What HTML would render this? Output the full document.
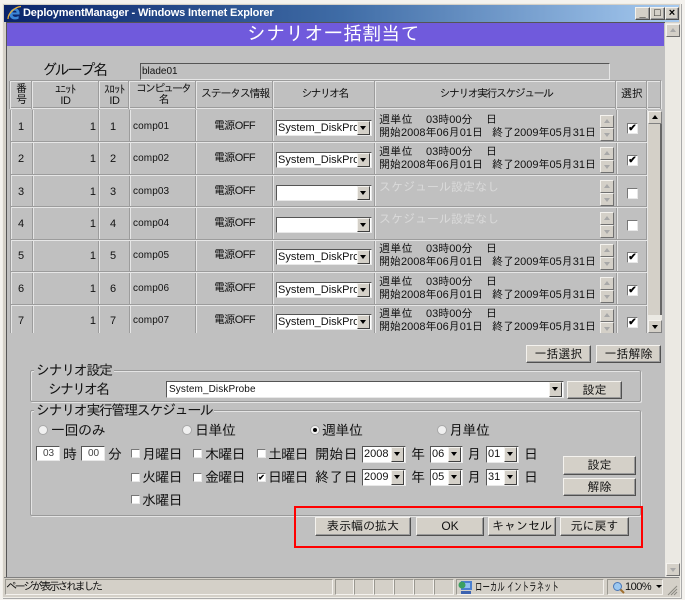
<!DOCTYPE html>
<html lang="ja"><head><meta charset="utf-8"><title>DeploymentManager</title>
<style>
html,body{margin:0;padding:0;width:685px;height:600px;overflow:hidden;background:#f4f2ee}
body{position:relative;font-family:"Liberation Sans","IPAGothic","Noto Sans CJK JP",sans-serif;color:#111;font-size:13px;filter:blur(.3px)}
div,span,i,b{position:absolute;display:block;box-sizing:border-box;font-style:normal;font-weight:normal}
.t{white-space:nowrap;line-height:16px}
.x{font-size:14px;letter-spacing:-.7px}
.h{font-size:11px;line-height:11px;text-align:center;white-space:nowrap;letter-spacing:-1.3px}
.btn{background:#d4d0c8;border:1px solid;border-color:#f4f2ee #505050 #505050 #f4f2ee;box-shadow:inset -1px -1px 0 #9a9a9a;text-align:center;font-size:12px;line-height:16px;white-space:nowrap;color:#111}
.v{width:1px;background:#e6e6e6;box-shadow:-1px 0 0 #9c9c9c}
.l{height:1px;background:#e6e6e6;box-shadow:0 -1px 0 #9c9c9c}
.sel{background:#fff;border:1px solid;border-color:#555 #e8e8e8 #e8e8e8 #555;font-size:11px;line-height:14px;padding-left:1px;white-space:nowrap;overflow:hidden;letter-spacing:0}
.dd{top:0;right:1px;width:13px;bottom:0;background:#d4d0c8;border:1px solid;border-color:#f4f2ee #404040 #404040 #f4f2ee}
.dd:after{content:"";position:absolute;left:2px;top:4px;border:3px solid transparent;border-top:4px solid #000;border-bottom:0}
.r{left:0;width:660px;height:32px}
.n{left:14px;width:14px;top:8px;text-align:center;font-size:11px}
.u{left:60px;width:36px;top:8px;text-align:right;font-size:11px}
.o{left:106px;width:14px;top:8px;text-align:center;font-size:11px}
.c{left:133px;top:8px;font-size:10px;letter-spacing:.1px}
.p{left:214px;top:7px;font-size:11px;letter-spacing:-.6px}
.rs{left:276px;top:9px;width:96px;height:16px}
.s1,.s2,.s3,.s4,.s5{font-size:11px;line-height:12px}
.s1{left:379px;top:3px;letter-spacing:.3px}.s2{left:426px;top:3px}.s3{left:486px;top:3px}
.s4{left:379px;top:16px}.s5{left:492px;top:16px}
.e{left:379px;top:5px;font-size:12px;line-height:12px;color:#dadada;letter-spacing:0;white-space:nowrap}
.sp1,.sp2{left:600px;width:14px;height:13px;background:#d4d0c8;border:1px solid;border-color:#f4f2ee #707070 #707070 #f4f2ee}
.sp1{top:4px}.sp2{top:17px}
.sp1:after{content:"";position:absolute;left:3px;top:3px;border:3px solid transparent;border-bottom:4px solid #a8a8a8;border-top:0}
.sp2:after{content:"";position:absolute;left:3px;top:4px;border:3px solid transparent;border-top:4px solid #a8a8a8;border-bottom:0}
.cb{width:11px;height:11px;background:#fff;border:1px solid;border-color:#777 #e8e8e8 #e8e8e8 #777;font-size:10px;line-height:9px;text-align:center;color:#000;font-weight:bold;overflow:hidden}
.m{width:9px;height:9px;font-size:8px;line-height:7px}
.k{left:627px;top:12px}
.rad{width:10px;height:10px;border-radius:50%;background:#f0f0f0;border:1px solid #a8a8a8}
.dot{left:2px;top:2px;width:4px;height:4px;border-radius:50%;background:#000}
.fs{border:1px solid #9a9a9a;box-shadow:inset 1px 1px 0 #e4e4e4,1px 1px 0 #e4e4e4;border-radius:2px}
.lg{background:#c0c0c0;padding:0 2px;font-size:14px;line-height:14px;white-space:nowrap;letter-spacing:-1.4px}
.sb{background:#d4d0c8;border:1px solid;border-color:#f4f2ee #808080 #808080 #f4f2ee}
.seg{top:579px;height:16px;border:1px solid;border-color:#9a9890 #f4f2ee #f4f2ee #9a9890}
</style></head><body>

<!-- window frame -->
<div style="left:2px;top:3px;width:679px;height:595px;background:#d4d0c8;border:1px solid #f0eee8;box-shadow:1px 1px 0 #aaa"></div>
<div style="left:4px;top:5px;width:675px;height:17px;background:linear-gradient(90deg,#0a246a,#3f6ca6 50%,#a6caf0)"></div>
<svg style="position:absolute;left:7px;top:5px" width="16" height="16" viewBox="0 0 16 16"><path d="M12.5 9.5H5.5C5.6 12 9 12.6 11.6 11V13.6C7.500 15.500 2.500 14 2.500 9.500 2.500 5.500 6 3 9 3.500 12 4 13 7 12.500 9.500ZM9.600 7.500C9.500 5 5.900 5 5.500 7.500Z" fill="#3b86d8" fill-rule="evenodd"/><path d="M1 14C1 8 8 2 14 1.500" fill="none" stroke="#e8b23a" stroke-width="1.300"/></svg>
<span class="t" style="left:23px;top:5px;color:#fff;font-size:11px;letter-spacing:-.15px;font-weight:700">DeploymentManager - Windows Internet Explorer</span>
<div class="btn" style="left:635px;top:7px;width:15px;height:13px;font-weight:bold;line-height:11px;color:#000;font-size:11px">_</div>
<div class="btn" style="left:650px;top:7px;width:15px;height:13px;line-height:10px;color:#000;font-size:11px">□</div>
<div class="btn" style="left:665px;top:7px;width:14px;height:13px;line-height:10px;color:#000;font-size:11px;font-weight:700">×</div>

<!-- page -->
<div style="left:6px;top:22px;width:659px;height:555px;background:#c0c0c0;border-left:1px solid #555;border-top:1px solid #555"></div>
<div style="left:7px;top:23px;width:657px;height:23px;background:#705adc"></div>
<span class="t" style="left:247px;top:24px;color:#fff;font-size:19px;line-height:21px;letter-spacing:.2px">シナリオ一括割当て</span>

<!-- right scrollbar -->
<div style="left:665px;top:23px;width:15px;height:554px;background:#ebe9e3"></div>
<div class="sp1" style="left:666px;top:24px"></div>
<div class="sp2" style="left:666px;top:563px"></div>

<span class="t" style="left:42px;top:63px;font-size:15px;letter-spacing:-2.200px">グループ名</span>
<div style="left:140px;top:63px;width:470px;height:17px;border:1px solid;border-color:#555 #e6e6e6 #e6e6e6 #555"></div>
<span class="t" style="left:142px;top:64px;font-size:10px;line-height:15px">blade01</span>

<!-- header -->
<div class="l" style="left:10px;top:81px;width:651px"></div>
<div class="l" style="left:10px;top:108px;width:651px"></div>
<div class="v" style="left:10px;top:81px;height:28px"></div>
<div class="v" style="left:32px;top:81px;height:28px"></div>
<div class="v" style="left:99px;top:81px;height:28px"></div>
<div class="v" style="left:129px;top:81px;height:28px"></div>
<div class="v" style="left:196px;top:81px;height:28px"></div>
<div class="v" style="left:273px;top:81px;height:28px"></div>
<div class="v" style="left:375px;top:81px;height:28px"></div>
<div class="v" style="left:616px;top:81px;height:28px"></div>
<div class="v" style="left:647px;top:81px;height:28px"></div>
<div class="v" style="left:661px;top:81px;height:28px"></div>
<span class="h" style="left:11px;width:21px;top:84px;letter-spacing:0">番<br>号</span>
<span class="h" style="left:33px;width:65px;top:85px;letter-spacing:-.4px">ﾕﾆｯﾄ<br>ID</span>
<span class="h" style="left:100px;width:29px;top:85px;letter-spacing:-.4px">ｽﾛｯﾄ<br>ID</span>
<span class="h" style="left:130px;width:66px;top:84px;letter-spacing:-2px">コンピュータ<br>名</span>
<span class="h" style="left:197px;width:76px;top:89px">ステータス情報</span>
<span class="h" style="left:274px;width:101px;top:89px;letter-spacing:-1.8px">シナリオ名</span>
<span class="h" style="left:376px;width:240px;top:89px;letter-spacing:-1.6px">シナリオ実行スケジュール</span>
<span class="h" style="left:617px;width:30px;top:89px;letter-spacing:0">選択</span>

<!-- rows viewport -->
<div style="left:0;top:110px;width:662px;height:223px;overflow:hidden">
<div class="v" style="left:11px;top:0;height:223px"></div>
<div class="v" style="left:33px;top:0;height:223px"></div>
<div class="v" style="left:99px;top:0;height:223px"></div>
<div class="v" style="left:130px;top:0;height:223px"></div>
<div class="v" style="left:196px;top:0;height:223px"></div>
<div class="v" style="left:273px;top:0;height:223px"></div>
<div class="v" style="left:375px;top:0;height:223px"></div>
<div class="v" style="left:617px;top:0;height:223px"></div>
<div class="v" style="left:647px;top:0;height:223px"></div>
<div class="l" style="left:11px;top:32px;width:636px"></div>
<div class="l" style="left:11px;top:65px;width:636px"></div>
<div class="l" style="left:11px;top:97px;width:636px"></div>
<div class="l" style="left:11px;top:130px;width:636px"></div>
<div class="l" style="left:11px;top:162px;width:636px"></div>
<div class="l" style="left:11px;top:195px;width:636px"></div>

<div class="r" style="top:1px"><span class="t n">1</span><span class="t u">1</span><span class="t o">1</span><span class="t c">comp01</span><span class="t p">電源OFF</span><div class="sel rs">System_DiskProl<i class="dd"></i></div><span class="t s1">週単位</span><span class="t s2">03時00分</span><span class="t s3">日</span><span class="t s4">開始2008年06月01日</span><span class="t s5">終了2009年05月31日</span><i class="sp1"></i><i class="sp2"></i><div class="cb k">✔</div></div>
<div class="r" style="top:33px"><span class="t n">2</span><span class="t u">1</span><span class="t o">2</span><span class="t c">comp02</span><span class="t p">電源OFF</span><div class="sel rs">System_DiskProl<i class="dd"></i></div><span class="t s1">週単位</span><span class="t s2">03時00分</span><span class="t s3">日</span><span class="t s4">開始2008年06月01日</span><span class="t s5">終了2009年05月31日</span><i class="sp1"></i><i class="sp2"></i><div class="cb k">✔</div></div>
<div class="r" style="top:66px"><span class="t n">3</span><span class="t u">1</span><span class="t o">3</span><span class="t c">comp03</span><span class="t p">電源OFF</span><div class="sel rs"><i class="dd"></i></div><span class="e t">スケジュール設定なし</span><i class="sp1"></i><i class="sp2"></i><div class="cb k"></div></div>
<div class="r" style="top:98px"><span class="t n">4</span><span class="t u">1</span><span class="t o">4</span><span class="t c">comp04</span><span class="t p">電源OFF</span><div class="sel rs"><i class="dd"></i></div><span class="e t">スケジュール設定なし</span><i class="sp1"></i><i class="sp2"></i><div class="cb k"></div></div>
<div class="r" style="top:130px"><span class="t n">5</span><span class="t u">1</span><span class="t o">5</span><span class="t c">comp05</span><span class="t p">電源OFF</span><div class="sel rs">System_DiskProl<i class="dd"></i></div><span class="t s1">週単位</span><span class="t s2">03時00分</span><span class="t s3">日</span><span class="t s4">開始2008年06月01日</span><span class="t s5">終了2009年05月31日</span><i class="sp1"></i><i class="sp2"></i><div class="cb k">✔</div></div>
<div class="r" style="top:163px"><span class="t n">6</span><span class="t u">1</span><span class="t o">6</span><span class="t c">comp06</span><span class="t p">電源OFF</span><div class="sel rs">System_DiskProl<i class="dd"></i></div><span class="t s1">週単位</span><span class="t s2">03時00分</span><span class="t s3">日</span><span class="t s4">開始2008年06月01日</span><span class="t s5">終了2009年05月31日</span><i class="sp1"></i><i class="sp2"></i><div class="cb k">✔</div></div>
<div class="r" style="top:195px"><span class="t n">7</span><span class="t u">1</span><span class="t o">7</span><span class="t c">comp07</span><span class="t p">電源OFF</span><div class="sel rs">System_DiskProl<i class="dd"></i></div><span class="t s1">週単位</span><span class="t s2">03時00分</span><span class="t s3">日</span><span class="t s4">開始2008年06月01日</span><span class="t s5">終了2009年05月31日</span><i class="sp1"></i><i class="sp2"></i><div class="cb k">✔</div></div>
</div>

<!-- table scrollbar -->
<div style="left:648px;top:111px;width:14px;height:222px;background:#d4d0c8;border-right:2px solid #666"></div>
<div class="sb" style="left:648px;top:111px;width:14px;height:13px"></div>
<div style="left:652px;top:115px;width:0;height:0;border:3px solid transparent;border-bottom:4px solid #000;border-top:0"></div>
<div style="left:648px;top:315px;width:14px;height:5px;background:#ebe9e3"></div>
<div class="sb" style="left:648px;top:320px;width:14px;height:13px"></div>
<div style="left:652px;top:325px;width:0;height:0;border:3px solid transparent;border-top:4px solid #000;border-bottom:0"></div>

<div class="btn" style="left:526px;top:345px;width:65px;height:18px">一括選択</div>
<div class="btn" style="left:596px;top:345px;width:65px;height:18px">一括解除</div>

<!-- scenario settings -->
<div class="fs" style="left:30px;top:370px;width:611px;height:32px"></div>
<span class="lg" style="left:34px;top:363px">シナリオ設定</span>
<span class="t" style="left:48px;top:381px;font-size:14px;letter-spacing:-2px">シナリオ名</span>
<div class="sel" style="left:166px;top:381px;width:398px;height:17px;line-height:15px;font-size:10px;padding-left:2px;letter-spacing:.1px">System_DiskProbe<i class="dd"></i></div>
<div class="btn" style="left:567px;top:381px;width:55px;height:18px">設定</div>

<!-- schedule -->
<div class="fs" style="left:30px;top:410px;width:611px;height:106px"></div>
<span class="lg" style="left:34px;top:403px">シナリオ実行管理スケジュール</span>

<i class="rad" style="left:38px;top:425px"></i><span class="t x" style="left:51px;top:422px;letter-spacing:-.5px">一回のみ</span>
<i class="rad" style="left:182px;top:425px"></i><span class="t x" style="left:195px;top:422px;letter-spacing:-.5px">日単位</span>
<i class="rad" style="left:310px;top:425px"><i class="dot"></i></i><span class="t x" style="left:322px;top:422px;letter-spacing:-.5px">週単位</span>
<i class="rad" style="left:437px;top:425px"></i><span class="t x" style="left:449px;top:422px;letter-spacing:-.5px">月単位</span>

<div class="sel" style="left:36px;top:446px;width:24px;height:15px;font-size:10px;line-height:13px;text-align:center;color:#444">03</div>
<span class="t x" style="left:63px;top:446px">時</span>
<div class="sel" style="left:81px;top:446px;width:24px;height:15px;font-size:10px;line-height:13px;text-align:center;color:#444">00</div>
<span class="t x" style="left:108px;top:446px">分</span>

<div class="cb m" style="left:131px;top:449px"></div><span class="t x" style="left:142px;top:446px">月曜日</span>
<div class="cb m" style="left:193px;top:449px"></div><span class="t x" style="left:205px;top:446px">木曜日</span>
<div class="cb m" style="left:257px;top:449px"></div><span class="t x" style="left:268px;top:446px">土曜日</span>
<div class="cb m" style="left:131px;top:473px"></div><span class="t x" style="left:142px;top:469px">火曜日</span>
<div class="cb m" style="left:193px;top:473px"></div><span class="t x" style="left:205px;top:469px">金曜日</span>
<div class="cb m" style="left:257px;top:473px">✔</div><span class="t x" style="left:268px;top:469px">日曜日</span>
<div class="cb m" style="left:131px;top:495px"></div><span class="t x" style="left:142px;top:492px">水曜日</span>

<span class="t x" style="left:315px;top:446px;letter-spacing:.3px">開始日</span>
<span class="t x" style="left:315px;top:469px;letter-spacing:.3px">終了日</span>

<div class="sel" style="left:362px;top:446px;width:44px;height:17px;line-height:15px">2008<i class="dd"></i></div>
<span class="t x" style="left:411px;top:446px">年</span>
<div class="sel" style="left:430px;top:446px;width:33px;height:17px;line-height:15px">06<i class="dd"></i></div>
<span class="t x" style="left:467px;top:446px">月</span>
<div class="sel" style="left:486px;top:446px;width:33px;height:17px;line-height:15px">01<i class="dd"></i></div>
<span class="t x" style="left:524px;top:446px">日</span>

<div class="sel" style="left:362px;top:469px;width:44px;height:17px;line-height:15px">2009<i class="dd"></i></div>
<span class="t x" style="left:411px;top:469px">年</span>
<div class="sel" style="left:430px;top:469px;width:33px;height:17px;line-height:15px">05<i class="dd"></i></div>
<span class="t x" style="left:467px;top:469px">月</span>
<div class="sel" style="left:486px;top:469px;width:33px;height:17px;line-height:15px">31<i class="dd"></i></div>
<span class="t x" style="left:524px;top:469px">日</span>

<div class="btn" style="left:563px;top:456px;width:73px;height:19px">設定</div>
<div class="btn" style="left:563px;top:478px;width:73px;height:18px">解除</div>

<!-- bottom buttons -->
<div class="btn" style="left:315px;top:517px;width:96px;height:19px">表示幅の拡大</div>
<div class="btn" style="left:416px;top:517px;width:68px;height:19px">OK</div>
<div class="btn" style="left:488px;top:517px;width:68px;height:19px">キャンセル</div>
<div class="btn" style="left:560px;top:517px;width:69px;height:19px">元に戻す</div>
<div style="left:294px;top:506px;width:349px;height:42px;border:2px solid #f00"></div>

<!-- status bar -->
<div style="left:4px;top:577px;width:675px;height:20px;background:#d4d0c8;border-top:1px solid #808080"></div>
<div class="seg" style="left:5px;width:328px"></div>
<span class="t" style="left:6px;top:579px;font-size:11px;letter-spacing:-2.4px;line-height:17px">ページが表示されました</span>
<div class="seg" style="left:335px;width:19px"></div>
<div class="seg" style="left:354px;width:20px"></div>
<div class="seg" style="left:374px;width:20px"></div>
<div class="seg" style="left:394px;width:20px"></div>
<div class="seg" style="left:414px;width:20px"></div>
<div class="seg" style="left:434px;width:20px"></div>
<div class="seg" style="left:456px;width:148px"></div>
<svg style="position:absolute;left:458px;top:580px" width="15" height="15" viewBox="0 0 15 15"><rect x="3" y="1" width="11" height="9" fill="#4a7fd0"/><rect x="5" y="3" width="7" height="5" fill="#8fc0f0"/><circle cx="4" cy="5" r="3.500" fill="#3aa060"/><rect x="3" y="11" width="10" height="3" fill="#3c62b0"/></svg>
<span class="t" style="left:475px;top:579px;font-size:12px;line-height:17px;transform:scaleX(.62);transform-origin:0 0">ローカル イントラネット</span>
<div class="seg" style="left:607px;width:56px"></div>
<svg style="position:absolute;left:612px;top:581px" width="13" height="13" viewBox="0 0 13 13"><circle cx="5.500" cy="5.500" r="4" fill="#9cc8f0" stroke="#4a78b8"/><path d="M8.500 8.500L12 12" stroke="#a07030" stroke-width="2"/></svg>
<span class="t" style="left:625px;top:579px;font-size:11px;letter-spacing:-.5px;line-height:17px">100%</span>
<div style="left:656px;top:585px;width:0;height:0;border:3px solid transparent;border-top:3px solid #000;border-bottom:0"></div>
<svg style="position:absolute;left:666px;top:584px" width="12" height="12" viewBox="0 0 12 12"><path d="M11 2L2 11M11 5L5 11M11 8L8 11" stroke="#8a8880" stroke-width="1"/></svg>

</body></html>
